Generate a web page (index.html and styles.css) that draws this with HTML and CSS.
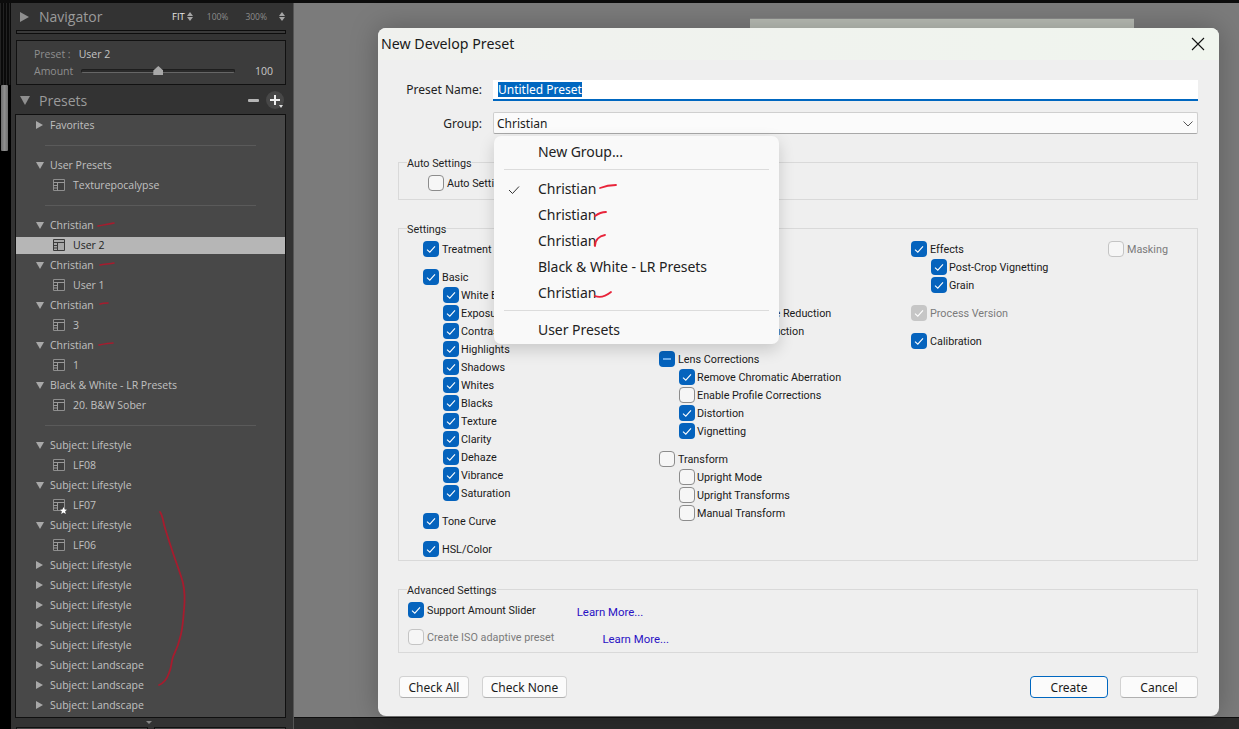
FILE: index.html
```html
<!DOCTYPE html>
<html lang="en">
<head>
<meta charset="utf-8">
<title>New Develop Preset</title>
<link rel="stylesheet" href="styles.css">
</head>
<body>
<svg class="defs" width="0" height="0" aria-hidden="true">
  <symbol id="chk" viewBox="0 0 16 16"><path d="M4 8.6 6.8 11.2 12 5.4" fill="none" stroke="#fff" stroke-width="1.1"/></symbol>
  <symbol id="doc" viewBox="0 0 12 12"><path d="M.5.5h11v11H.5z" fill="#3e3e3e" stroke="#8e8e8e"/><path d="M.5 3.5h11M.5 6.5h4M.5 9h4M4.5 3.5v8" fill="none" stroke="#9a9a9a"/></symbol>
  <symbol id="docd" viewBox="0 0 12 12"><path d="M.5.5h11v11H.5z" fill="#a8a8a8" stroke="#3a3a3a"/><path d="M.5 3.5h11M.5 6.5h4M.5 9h4M4.5 3.5v8" fill="none" stroke="#3a3a3a"/></symbol>
</svg>

<div class="app">
  <div class="topline"></div>
  <div class="workspace">
    <div class="rail">
      <div class="rail-stripes"></div>
      <div class="rail-thumb"></div>
    </div>

    <aside class="panel">
      <header class="phead nav-head">
        <span class="tri-right big"></span>
        <span class="ptitle">Navigator</span>
        <span class="zooms">
          <span class="zoom on">FIT</span><span class="updown"></span>
          <span class="zoom z100">100%</span>
          <span class="zoom z300">300%</span><span class="updown last"></span>
        </span>
      </header>
      <div class="nav-strip"></div>

      <section class="amount-box">
        <div class="amt-line">
          <span class="amt-key">Preset :</span><span class="amt-val">User 2</span>
        </div>
        <div class="amt-line amt-second">
          <span class="amt-key">Amount</span>
          <span class="slider"><span class="knob"></span></span>
          <span class="amt-num">100</span>
        </div>
      </section>

      <header class="phead preset-head">
        <span class="tri-down big"></span>
        <span class="ptitle">Presets</span>
        <span class="minus"></span>
        <span class="plus"><span class="plus-v"></span><span class="plus-h"></span><span class="plus-caret"></span></span>
      </header>

      <section class="list">
        <div class="row"><span class="tri-right"></span>Favorites</div>
        <div class="row sep"><i></i></div>
        <div class="row"><span class="tri-down"></span>User Presets</div>
        <div class="row child"><svg class="doc"><use href="#doc"/></svg>Texturepocalypse</div>
        <div class="row sep"><i></i></div>
        <div class="row"><span class="tri-down"></span>Christian</div>
        <div class="row child selected"><svg class="doc"><use href="#docd"/></svg>User 2</div>
        <div class="row"><span class="tri-down"></span>Christian</div>
        <div class="row child"><svg class="doc"><use href="#doc"/></svg>User 1</div>
        <div class="row"><span class="tri-down"></span>Christian</div>
        <div class="row child"><svg class="doc"><use href="#doc"/></svg>3</div>
        <div class="row"><span class="tri-down"></span>Christian</div>
        <div class="row child"><svg class="doc"><use href="#doc"/></svg>1</div>
        <div class="row"><span class="tri-down"></span>Black &amp; White - LR Presets</div>
        <div class="row child"><svg class="doc"><use href="#doc"/></svg>20. B&amp;W Sober</div>
        <div class="row sep"><i></i></div>
        <div class="row"><span class="tri-down"></span>Subject: Lifestyle</div>
        <div class="row child"><svg class="doc"><use href="#doc"/></svg>LF08</div>
        <div class="row"><span class="tri-down"></span>Subject: Lifestyle</div>
        <div class="row child"><svg class="doc"><use href="#doc"/></svg><span class="star"></span>LF07</div>
        <div class="row"><span class="tri-down"></span>Subject: Lifestyle</div>
        <div class="row child"><svg class="doc"><use href="#doc"/></svg>LF06</div>
        <div class="row"><span class="tri-right"></span>Subject: Lifestyle</div>
        <div class="row"><span class="tri-right"></span>Subject: Lifestyle</div>
        <div class="row"><span class="tri-right"></span>Subject: Lifestyle</div>
        <div class="row"><span class="tri-right"></span>Subject: Lifestyle</div>
        <div class="row"><span class="tri-right"></span>Subject: Lifestyle</div>
        <div class="row"><span class="tri-right"></span>Subject: Landscape</div>
        <div class="row"><span class="tri-right"></span>Subject: Landscape</div>
        <div class="row"><span class="tri-right"></span>Subject: Landscape</div>
      </section>
      <div class="panel-foot">
        <span class="foot-caret"></span>
        <div class="foot-btns"><span></span><span></span></div>
      </div>
    </aside>

    <main class="stage">
      <div class="canvas"><div class="photo"></div></div>
      <div class="filmbar"></div>

      <div class="dialog">
        <div class="titlebar">
          <span class="dtitle">New Develop Preset</span>
          <svg class="close" width="14" height="14" viewBox="0 0 14 14"><path d="M1 1l12 12M13 1 1 13" stroke="#111" stroke-width="1.1" fill="none"/></svg>
        </div>
        <div class="dbody">
          <div class="field">
            <label class="flabel">Preset Name:</label>
            <div class="input"><span class="sel-text">Untitled Preset</span></div>
          </div>
          <div class="field group-field">
            <label class="flabel">Group:</label>
            <div class="select">Christian
              <svg class="chev" width="10" height="6" viewBox="0 0 10 6"><path d="M.5.5 5 5 9.500.5" fill="none" stroke="#555" stroke-width="1"/></svg>
            </div>
          </div>

          <fieldset class="box box-auto">
            <legend>Auto Settings</legend>
            <div class="chk"><span class="cb"></span>Auto Settings</div>
          </fieldset>

          <fieldset class="box box-settings">
            <legend>Settings</legend>
            <div class="cols">
              <div class="col">
                <div class="chk"><span class="cb on"><svg><use href="#chk"/></svg></span>Treatment &amp; Profile</div>
                <div class="chk gap"><span class="cb on"><svg><use href="#chk"/></svg></span>Basic</div>
                <div class="chk sub"><span class="cb on"><svg><use href="#chk"/></svg></span>White Balance</div>
                <div class="chk sub"><span class="cb on"><svg><use href="#chk"/></svg></span>Exposure</div>
                <div class="chk sub"><span class="cb on"><svg><use href="#chk"/></svg></span>Contrast</div>
                <div class="chk sub"><span class="cb on"><svg><use href="#chk"/></svg></span>Highlights</div>
                <div class="chk sub"><span class="cb on"><svg><use href="#chk"/></svg></span>Shadows</div>
                <div class="chk sub"><span class="cb on"><svg><use href="#chk"/></svg></span>Whites</div>
                <div class="chk sub"><span class="cb on"><svg><use href="#chk"/></svg></span>Blacks</div>
                <div class="chk sub"><span class="cb on"><svg><use href="#chk"/></svg></span>Texture</div>
                <div class="chk sub"><span class="cb on"><svg><use href="#chk"/></svg></span>Clarity</div>
                <div class="chk sub"><span class="cb on"><svg><use href="#chk"/></svg></span>Dehaze</div>
                <div class="chk sub"><span class="cb on"><svg><use href="#chk"/></svg></span>Vibrance</div>
                <div class="chk sub"><span class="cb on"><svg><use href="#chk"/></svg></span>Saturation</div>
                <div class="chk gap"><span class="cb on"><svg><use href="#chk"/></svg></span>Tone Curve</div>
                <div class="chk gap"><span class="cb on"><svg><use href="#chk"/></svg></span>HSL/Color</div>
              </div>
              <div class="col">
                <div class="chk"></div>
                <div class="chk gap"></div>
                <div class="chk sub"></div>
                <div class="chk sub"><span class="cb on"><svg><use href="#chk"/></svg></span>Luminance Noise Reduction</div>
                <div class="chk sub"><span class="cb on"><svg><use href="#chk"/></svg></span>Color Noise Reduction</div>
                <div class="chk gap"><span class="cb on dash"><i></i></span>Lens Corrections</div>
                <div class="chk sub"><span class="cb on"><svg><use href="#chk"/></svg></span>Remove Chromatic Aberration</div>
                <div class="chk sub"><span class="cb"></span>Enable Profile Corrections</div>
                <div class="chk sub"><span class="cb on"><svg><use href="#chk"/></svg></span>Distortion</div>
                <div class="chk sub"><span class="cb on"><svg><use href="#chk"/></svg></span>Vignetting</div>
                <div class="chk gap"><span class="cb"></span>Transform</div>
                <div class="chk sub"><span class="cb"></span>Upright Mode</div>
                <div class="chk sub"><span class="cb"></span>Upright Transforms</div>
                <div class="chk sub"><span class="cb"></span>Manual Transform</div>
              </div>
              <div class="col">
                <div class="chk"><span class="cb on"><svg><use href="#chk"/></svg></span>Effects</div>
                <div class="chk sub"><span class="cb on"><svg><use href="#chk"/></svg></span>Post-Crop Vignetting</div>
                <div class="chk sub"><span class="cb on"><svg><use href="#chk"/></svg></span>Grain</div>
                <div class="chk gap off"><span class="cb grey"><svg><use href="#chk"/></svg></span>Process Version</div>
                <div class="chk gap"><span class="cb on"><svg><use href="#chk"/></svg></span>Calibration</div>
              </div>
              <div class="col">
                <div class="chk off"><span class="cb faint"></span>Masking</div>
              </div>
            </div>
          </fieldset>

          <fieldset class="box box-adv">
            <legend>Advanced Settings</legend>
            <div class="chk adv-row"><span class="cb on"><svg><use href="#chk"/></svg></span>Support Amount Slider<a class="more more-a">Learn More...</a></div>
            <div class="chk adv-row off adv-second"><span class="cb faint"></span>Create ISO adaptive preset<a class="more more-b">Learn More...</a></div>
          </fieldset>

          <div class="foot">
            <button class="btn w-all">Check All</button>
            <button class="btn w-none">Check None</button>
            <span class="spring"></span>
            <button class="btn primary w-act">Create</button>
            <button class="btn w-act">Cancel</button>
          </div>
        </div>

        <div class="menu">
          <div class="mi mi-first">New Group...</div>
          <div class="msep msep-a"></div>
          <div class="mi"><svg class="tick" width="12" height="10" viewBox="0 0 12 10"><path d="M1 5 4.5 8.5 11 1.5" fill="none" stroke="#333" stroke-width="1"/></svg>Christian</div>
          <div class="mi">Christian</div>
          <div class="mi">Christian</div>
          <div class="mi">Black &amp; White - LR Presets</div>
          <div class="mi">Christian</div>
          <div class="msep msep-b"></div>
          <div class="mi mi-last">User Presets</div>
        </div>
      </div>
    </main>
  </div>
</div>

<svg class="ink" width="1239" height="729" viewBox="0 0 1239 729" aria-hidden="true">
  <g class="ink-dark">
    <path d="M98 226C103 225 109 224 114 223"/>
    <path d="M100 265C105 264 110 264 114 263"/>
    <path d="M100 304C103 303 105 303 108 303"/>
    <path d="M99 345C104 344 109 343 113 343"/>
    <path class="thick" d="M160 512C163 516 163 522 165 528C168 538 171 547 173 553C177 565 181 575 183 583C185 592 185 600 184 610C183 620 183 628 180 638C178 647 175 652 173 657C171 662 172 667 169 673C167 679 164 683 159 685"/>
  </g>
  <g class="ink-bright">
    <path d="M600 188C605 186 611 185 616 185"/>
    <path d="M595 216C599 213 603 212 606 212"/>
    <path d="M595 246C595 240 599 236 605 235"/>
    <path d="M595 296C600 298 606 296 611 292"/>
  </g>
</svg>
</body>
</html>
```

FILE: styles.css
```css
* { box-sizing: border-box; }
html, body { margin: 0; padding: 0; width: 1239px; height: 729px; overflow: hidden; background: #000; }
body { position: relative; font-family: "Noto Sans", "Open Sans", sans-serif; }
.defs { position: absolute; }

.app { display: flex; flex-direction: column; height: 729px; }
.topline { height: 3px; background: #0c0c0c; flex: none; }
.workspace { display: flex; flex: 1; min-height: 0; }

/* left rail */
.rail { width: 11px; flex: none; background: #000; display: flex; flex-direction: column; }
.rail-stripes { height: 82px; background: repeating-linear-gradient(90deg, #222 0 1px, #0a0a0a 1px 3px); }
.rail-thumb { height: 66px; width: 7px; margin-left: 1px; background: linear-gradient(90deg, #6e6e6e, #8e8e8e 50%, #6e6e6e); border-radius: 1px; }

/* panel */
.panel { width: 282px; flex: none; background: #333; display: flex; flex-direction: column; padding: 0 7px 0 5px; color: #aaa; font-family: "Open Sans", "Noto Sans", sans-serif; }
.phead { display: flex; align-items: center; flex: none; }
.nav-head { height: 27px; padding-left: 4px; }
.preset-head { height: 28px; padding-left: 4px; margin-top: 1px; }
.ptitle { font-size: 14px; color: #9b9b9b; margin-left: 10px; }
.preset-head .ptitle { margin-left: 9px; }
.tri-right, .tri-down { display: inline-block; width: 0; height: 0; flex: none; }
.tri-right { border-left: 7px solid #a8a8a8; border-top: 4px solid transparent; border-bottom: 4px solid transparent; }
.tri-down { border-top: 7px solid #a8a8a8; border-left: 4px solid transparent; border-right: 4px solid transparent; }
.tri-right.big { border-left: 9px solid #8f8f8f; border-top: 5px solid transparent; border-bottom: 5px solid transparent; }
.tri-down.big { border-top: 9px solid #8f8f8f; border-left: 5px solid transparent; border-right: 5px solid transparent; }
.zooms { margin-left: auto; display: flex; align-items: center; font-size: 8.5px; padding-right: 1px; color: #8c8c8c; }
.zoom.on { color: #e6e6e6; font-size: 9.5px; }
.z100 { margin-left: 14px; }
.z300 { margin-left: 17px; }
.updown { width: 6px; height: 9px; margin-left: 2px; display: flex; flex-direction: column; justify-content: space-between; }
.updown::before, .updown::after { content: ""; display: block; width: 0; height: 0; border-left: 3px solid transparent; border-right: 3px solid transparent; }
.updown::before { border-bottom: 4px solid #a6a6a6; }
.updown::after { border-top: 4px solid #a6a6a6; }
.updown.last { margin-left: 12px; }
.nav-strip { height: 4px; flex: none; background: #3a3a3a; border: 1px solid #0d0d0d; }

.amount-box { height: 45px; margin-top: 6px; flex: none; background: #3c3c3c; border: 1px solid #111; font-size: 10.5px; padding: 5px 12px 0 17px; }
.amt-line { display: flex; align-items: center; height: 16px; }
.amt-second { margin-top: 1px; }
.amt-key { color: #8f8f8f; }
.amt-val { margin-left: 8px; color: #c4c4c4; }
.slider { width: 154px; height: 4px; margin-left: 8px; background: #2a2a2a; border: 1px solid #1e1e1e; border-bottom-color: #666; border-radius: 2px; position: relative; }
.knob { position: absolute; left: 71px; top: -4px; width: 10px; height: 9px; background: #a8a8a8; clip-path: polygon(50% 0, 100% 50%, 100% 100%, 0 100%, 0 50%); }
.amt-num { margin-left: auto; color: #c8c8c8; }

.minus { margin-left: auto; width: 11px; height: 3px; background: #b5b5b5; border-radius: 1px; }
.plus { width: 18px; height: 18px; margin-left: 7px; margin-right: 2px; border-radius: 50%; background: #474747; position: relative; flex: none; }
.plus-v { position: absolute; left: 8px; top: 4px; width: 2px; height: 10px; background: #eee; }
.plus-h { position: absolute; left: 4px; top: 8px; width: 10px; height: 2px; background: #eee; }
.plus-caret { position: absolute; right: 1px; bottom: 1px; border-top: 3px solid #ddd; border-left: 2.5px solid transparent; border-right: 2.5px solid transparent; }

.list { height: 604px; flex: none; margin-left: -1px; background: #484848; border: 1px solid #101010; overflow: hidden; }
.row { height: 20px; display: flex; align-items: center; padding-left: 20px; font-size: 10.5px; color: #c0c0c0; white-space: nowrap; }
.row .tri-right, .row .tri-down { margin-right: 7px; }
.row .tri-down { margin-right: 6px; }
.child { padding-left: 37px; position: relative; }
.doc { width: 12px; height: 12px; margin-right: 8px; flex: none; }
.star { position: absolute; left: 44px; top: 12px; width: 7px; height: 7px; background: #fff; clip-path: polygon(50% 0, 65% 35%, 100% 38%, 73% 60%, 82% 100%, 50% 78%, 18% 100%, 27% 60%, 0 38%, 35% 35%); }
.selected { height: 17px; margin: 2px 0 1px; padding-bottom: 1px; background: #b6b6b6; color: #1e1e1e; }
.sep i { display: block; height: 1px; width: 211px; margin-left: 9px; background: #5a5a5a; }

.panel-foot { flex: 1; position: relative; }
.foot-caret { position: absolute; left: 130px; top: 3px; border-top: 3px solid #888; border-left: 3px solid transparent; border-right: 3px solid transparent; }
.foot-btns { display: flex; justify-content: space-between; margin-top: 9px; }
.foot-btns span { width: 132px; height: 4px; background: #454545; border: 1px solid #111; border-bottom: 0; }

/* stage */
.stage { flex: 1; display: flex; flex-direction: column; position: relative; background: #000; border-left: 1px solid #555; }
.canvas { flex: 1; background: #7b7b7b; padding: 15px 0 0 456px; overflow: hidden; }
.photo { width: 384px; height: 300px; background: #b9bdb5; border-top: 1px solid #8a8a8a; }
.filmbar { height: 12px; flex: none; background: #2b2b2b; border-top: 1px solid #0e0e0e; }

/* dialog */
.dialog { position: absolute; left: 84px; top: 25px; width: 841px; height: 688px; background: #efefef; border-radius: 8px; box-shadow: 0 0 28px rgba(0,0,0,.25); color: #1a1a1a; font-size: 10.8px; font-family: Roboto, "Noto Sans", sans-serif; }
.titlebar { height: 32px; background: linear-gradient(90deg, #f0f1ee, #f0f5ee); border-radius: 8px 8px 0 0; display: flex; align-items: center; padding: 0 14px 2px 3px; font-family: "Noto Sans", sans-serif; }
.titlebar .close { position: relative; top: 1px; }
.dtitle { font-size: 14.2px; }
.close { margin-left: auto; }
.dbody { padding: 20px 21px 0 20px; }
.field { display: flex; align-items: center; height: 21px; font-size: 12px; font-family: "Noto Sans", sans-serif; }
.group-field { height: 22px; margin-top: 11px; }
.flabel { width: 85px; margin-right: 11px; margin-left: -1px; text-align: right; color: #222; padding-bottom: 3px; }
.group-field .flabel { padding-bottom: 0; }
.input { flex: 1; height: 21px; background: #fff; border-bottom: 2px solid #0067c0; padding: 2px 0 0 5px; line-height: 15px; }
.sel-text { display: inline-block; background: #0067c0; color: #fff; }
.select { flex: 1; height: 22px; background: #fbfbfb; border: 1px solid #cfcfcf; border-bottom-color: #a8a8a8; border-radius: 2px; line-height: 21px; padding-left: 3px; position: relative; }
.chev { position: absolute; right: 4px; top: 8px; }

.box { margin: 0; min-width: 0; border: 1px solid #d9d9d9; padding: 0; }
.box legend { padding: 0; height: 14px; line-height: 14px; font-size: 10.8px; color: #1f1f1f; width: auto; position: relative; top: 2px; }
.box-auto { margin-top: 21px; padding: 5px 0 7px 29px; }
.box-auto legend { margin-left: -21px; }
.box-settings { margin-top: 21px; padding: 5px 0 2px 24px; }
.box-settings legend { margin-left: -16px; }
.box-adv { margin-top: 21px; padding: 5px 0 6px 9px; }
.box-adv legend { margin-left: -1px; }

.cols { display: grid; grid-template-columns: 236px 252px 197px 1fr; }
.col { display: flex; flex-direction: column; }
.chk { display: flex; align-items: center; height: 18px; white-space: nowrap; gap: 3px; }
.gap { margin-top: 10px; }
.sub { padding-left: 20px; gap: 2px; }
.off { color: #7b7b7b; }
.cb { width: 16px; height: 16px; flex: none; border: 1px solid #8c8c8c; border-radius: 4px; background: #f6f6f6; display: block; position: relative; }
.cb svg { position: absolute; inset: 0; width: 16px; height: 16px; }
.cb.on { background: #0563bd; border: 0; }
.cb.grey { background: #c6c6c6; border: 0; }
.cb.faint { border-color: #c4c4c4; }
.cb.dash i { position: absolute; left: 4px; top: 7px; width: 8px; height: 2px; background: #6fb0ee; }
.adv-second { margin-top: 9px; }
.more { color: #2a12c4; font-size: 11.4px; position: relative; top: 2px; }
.more-a { margin-left: 38px; }
.more-b { margin-left: 45px; }

.foot { display: flex; margin-top: 23px; font-family: "Noto Sans", sans-serif; }
.spring { flex: 1; }
.btn { height: 22px; font: inherit; font-size: 12px; color: #1a1a1a; background: #fbfbfb; border: 1px solid #d2d2d2; border-bottom-color: #b0b0b0; border-radius: 4px; padding: 0; }
.w-all { width: 70px; margin-left: 1px; margin-right: 13px; }
.w-none { width: 85px; }
.w-act { width: 78px; margin-left: 12px; }
.primary { border: 1px solid #0067c0; }

/* dropdown */
.menu { position: absolute; left: 116px; top: 108px; width: 285px; height: 208px; padding-top: 4px; background: #f9f9f9; border-radius: 7px; box-shadow: 0 6px 16px rgba(0,0,0,.16); font-size: 14px; color: #222; font-family: "Noto Sans", sans-serif; }
.mi { height: 26px; line-height: 26px; padding-left: 44px; position: relative; letter-spacing: -.05px; white-space: nowrap; }
.mi-first { height: 24px; line-height: 24px; }
.msep { height: 1px; margin: 0 10px; background: #dcdcdc; }
.msep-a { margin-top: 5px; margin-bottom: 6px; }
.msep-b { margin-top: 4px; margin-bottom: 6px; }
.mi-last { height: 26px; }
.tick { position: absolute; left: 14px; top: 9px; }

/* pen marks */
.ink { position: absolute; left: 0; top: 0; pointer-events: none; fill: none; stroke-linecap: round; stroke-linejoin: round; }
.ink-dark path { stroke: #a61c2e; stroke-width: 1.6; }
.ink-dark .thick { stroke-width: 1.8; }
.ink-bright path { stroke: #e8243a; stroke-width: 1.8; }
```
